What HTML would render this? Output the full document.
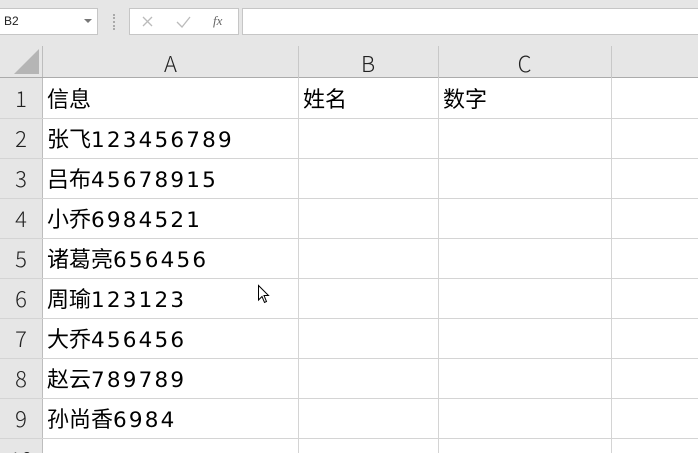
<!DOCTYPE html>
<html style="overflow:hidden;width:698px;height:453px"><head><meta charset="utf-8"><style>
*{margin:0;padding:0;box-sizing:border-box}
body{width:698px;height:453px;overflow:hidden;background:#fff;font-family:"Liberation Sans","Noto Sans CJK SC",sans-serif;position:relative}
.a{position:absolute}
.t{font-size:22px;color:#000;line-height:40px;white-space:nowrap;font-family:"Noto Sans CJK SC",sans-serif}
.t span{font-family:"DejaVu Sans",sans-serif;letter-spacing:2.2px;font-size:21.5px}
.h{font-size:22px;color:#222;text-align:center;line-height:30px;font-family:"Noto Sans CJK SC",sans-serif;font-weight:300}
</style></head><body>
<div class="a" style="left:0;top:0;width:698px;height:78px;background:#e6e6e6"></div>
<div class="a" style="left:0;top:78px;width:42px;height:375px;background:#e6e6e6"></div>
<div class="a" style="left:-1px;top:8px;width:99px;height:27px;background:#fff;border:1px solid #c6c6c6"></div>
<div class="a" style="left:4px;top:14px;font-size:12px;color:#222">B2</div>
<div class="a" style="left:84px;top:19px;width:0;height:0;border-left:4px solid transparent;border-right:4px solid transparent;border-top:4px solid #777"></div>
<div class="a" style="left:113px;top:14px;width:2px;height:16px;border-left:2px dotted #aaa"></div>
<div class="a" style="left:129px;top:8px;width:110px;height:27px;background:#fff;border:1px solid #c6c6c6"></div>
<svg class="a" style="left:140px;top:14px" width="16" height="16"><path d="M3,3 L12,12 M12,3 L3,12" stroke="#bbb" stroke-width="1.3"/></svg>
<svg class="a" style="left:175px;top:14px" width="18" height="16"><path d="M2,8 L7,13 L15,3" stroke="#bbb" stroke-width="1.3" fill="none"/></svg>
<div class="a" style="left:213px;top:13px;font-size:13px;font-style:italic;font-family:'Liberation Serif',serif;color:#666">fx</div>
<div class="a" style="left:242px;top:8px;width:460px;height:27px;background:#fff;border:1px solid #c6c6c6"></div>
<svg class="a" style="left:0;top:46px" width="43" height="33"><polygon points="14,28 39,3 39,28" fill="#b5b5b5"/></svg>
<div class="a" style="left:42px;top:46px;width:1px;height:407px;background:#bdbdbd"></div>
<div class="a" style="left:0;top:77px;width:698px;height:1px;background:#ababab"></div>
<div class="a" style="left:298px;top:46px;width:1px;height:32px;background:#c8c8c8"></div>
<div class="a" style="left:438px;top:46px;width:1px;height:32px;background:#c8c8c8"></div>
<div class="a" style="left:611px;top:46px;width:1px;height:32px;background:#c8c8c8"></div>
<div class="a h" style="left:43px;top:48px;width:255px">A</div>
<div class="a h" style="left:298px;top:48px;width:140px">B</div>
<div class="a h" style="left:438px;top:48px;width:173px">C</div>
<div class="a" style="left:298px;top:78px;width:1px;height:375px;background:#d4d4d4"></div>
<div class="a" style="left:438px;top:78px;width:1px;height:375px;background:#d4d4d4"></div>
<div class="a" style="left:611px;top:78px;width:1px;height:375px;background:#d4d4d4"></div>
<div class="a" style="left:0;top:118px;width:698px;height:1px;background:#d4d4d4"></div>
<div class="a" style="left:0;top:158px;width:698px;height:1px;background:#d4d4d4"></div>
<div class="a" style="left:0;top:198px;width:698px;height:1px;background:#d4d4d4"></div>
<div class="a" style="left:0;top:238px;width:698px;height:1px;background:#d4d4d4"></div>
<div class="a" style="left:0;top:278px;width:698px;height:1px;background:#d4d4d4"></div>
<div class="a" style="left:0;top:318px;width:698px;height:1px;background:#d4d4d4"></div>
<div class="a" style="left:0;top:358px;width:698px;height:1px;background:#d4d4d4"></div>
<div class="a" style="left:0;top:398px;width:698px;height:1px;background:#d4d4d4"></div>
<div class="a" style="left:0;top:438px;width:698px;height:1px;background:#d4d4d4"></div>
<div class="a h" style="left:0;top:83px;width:42px">1</div>
<div class="a h" style="left:0;top:123px;width:42px">2</div>
<div class="a h" style="left:0;top:163px;width:42px">3</div>
<div class="a h" style="left:0;top:203px;width:42px">4</div>
<div class="a h" style="left:0;top:243px;width:42px">5</div>
<div class="a h" style="left:0;top:283px;width:42px">6</div>
<div class="a h" style="left:0;top:323px;width:42px">7</div>
<div class="a h" style="left:0;top:363px;width:42px">8</div>
<div class="a h" style="left:0;top:403px;width:42px">9</div>
<div class="a" style="left:0;top:440px;width:42px;height:13px;overflow:hidden"><div class="h" style="position:relative;top:4px">10</div></div>
<div class="a t" style="left:47px;top:78px">信息</div>
<div class="a t" style="left:303px;top:78px">姓名</div>
<div class="a t" style="left:443px;top:78px">数字</div>
<div class="a t" style="left:47px;top:118px">张飞<span>123456789</span></div>
<div class="a t" style="left:47px;top:158px">吕布<span>45678915</span></div>
<div class="a t" style="left:47px;top:198px">小乔<span>6984521</span></div>
<div class="a t" style="left:47px;top:238px">诸葛亮<span>656456</span></div>
<div class="a t" style="left:47px;top:278px">周瑜<span>123123</span></div>
<div class="a t" style="left:47px;top:318px">大乔<span>456456</span></div>
<div class="a t" style="left:47px;top:358px">赵云<span>789789</span></div>
<div class="a t" style="left:47px;top:398px">孙尚香<span>6984</span></div>
<svg class="a" style="left:256px;top:284px" width="16" height="22"><path d="M2.5,1.5 L2.5,16 L6,12.5 L8.5,18.5 L10.5,17.5 L8,11.5 L12.5,11.5 Z" fill="#fff" stroke="#000" stroke-width="1"/></svg>
</body></html>
